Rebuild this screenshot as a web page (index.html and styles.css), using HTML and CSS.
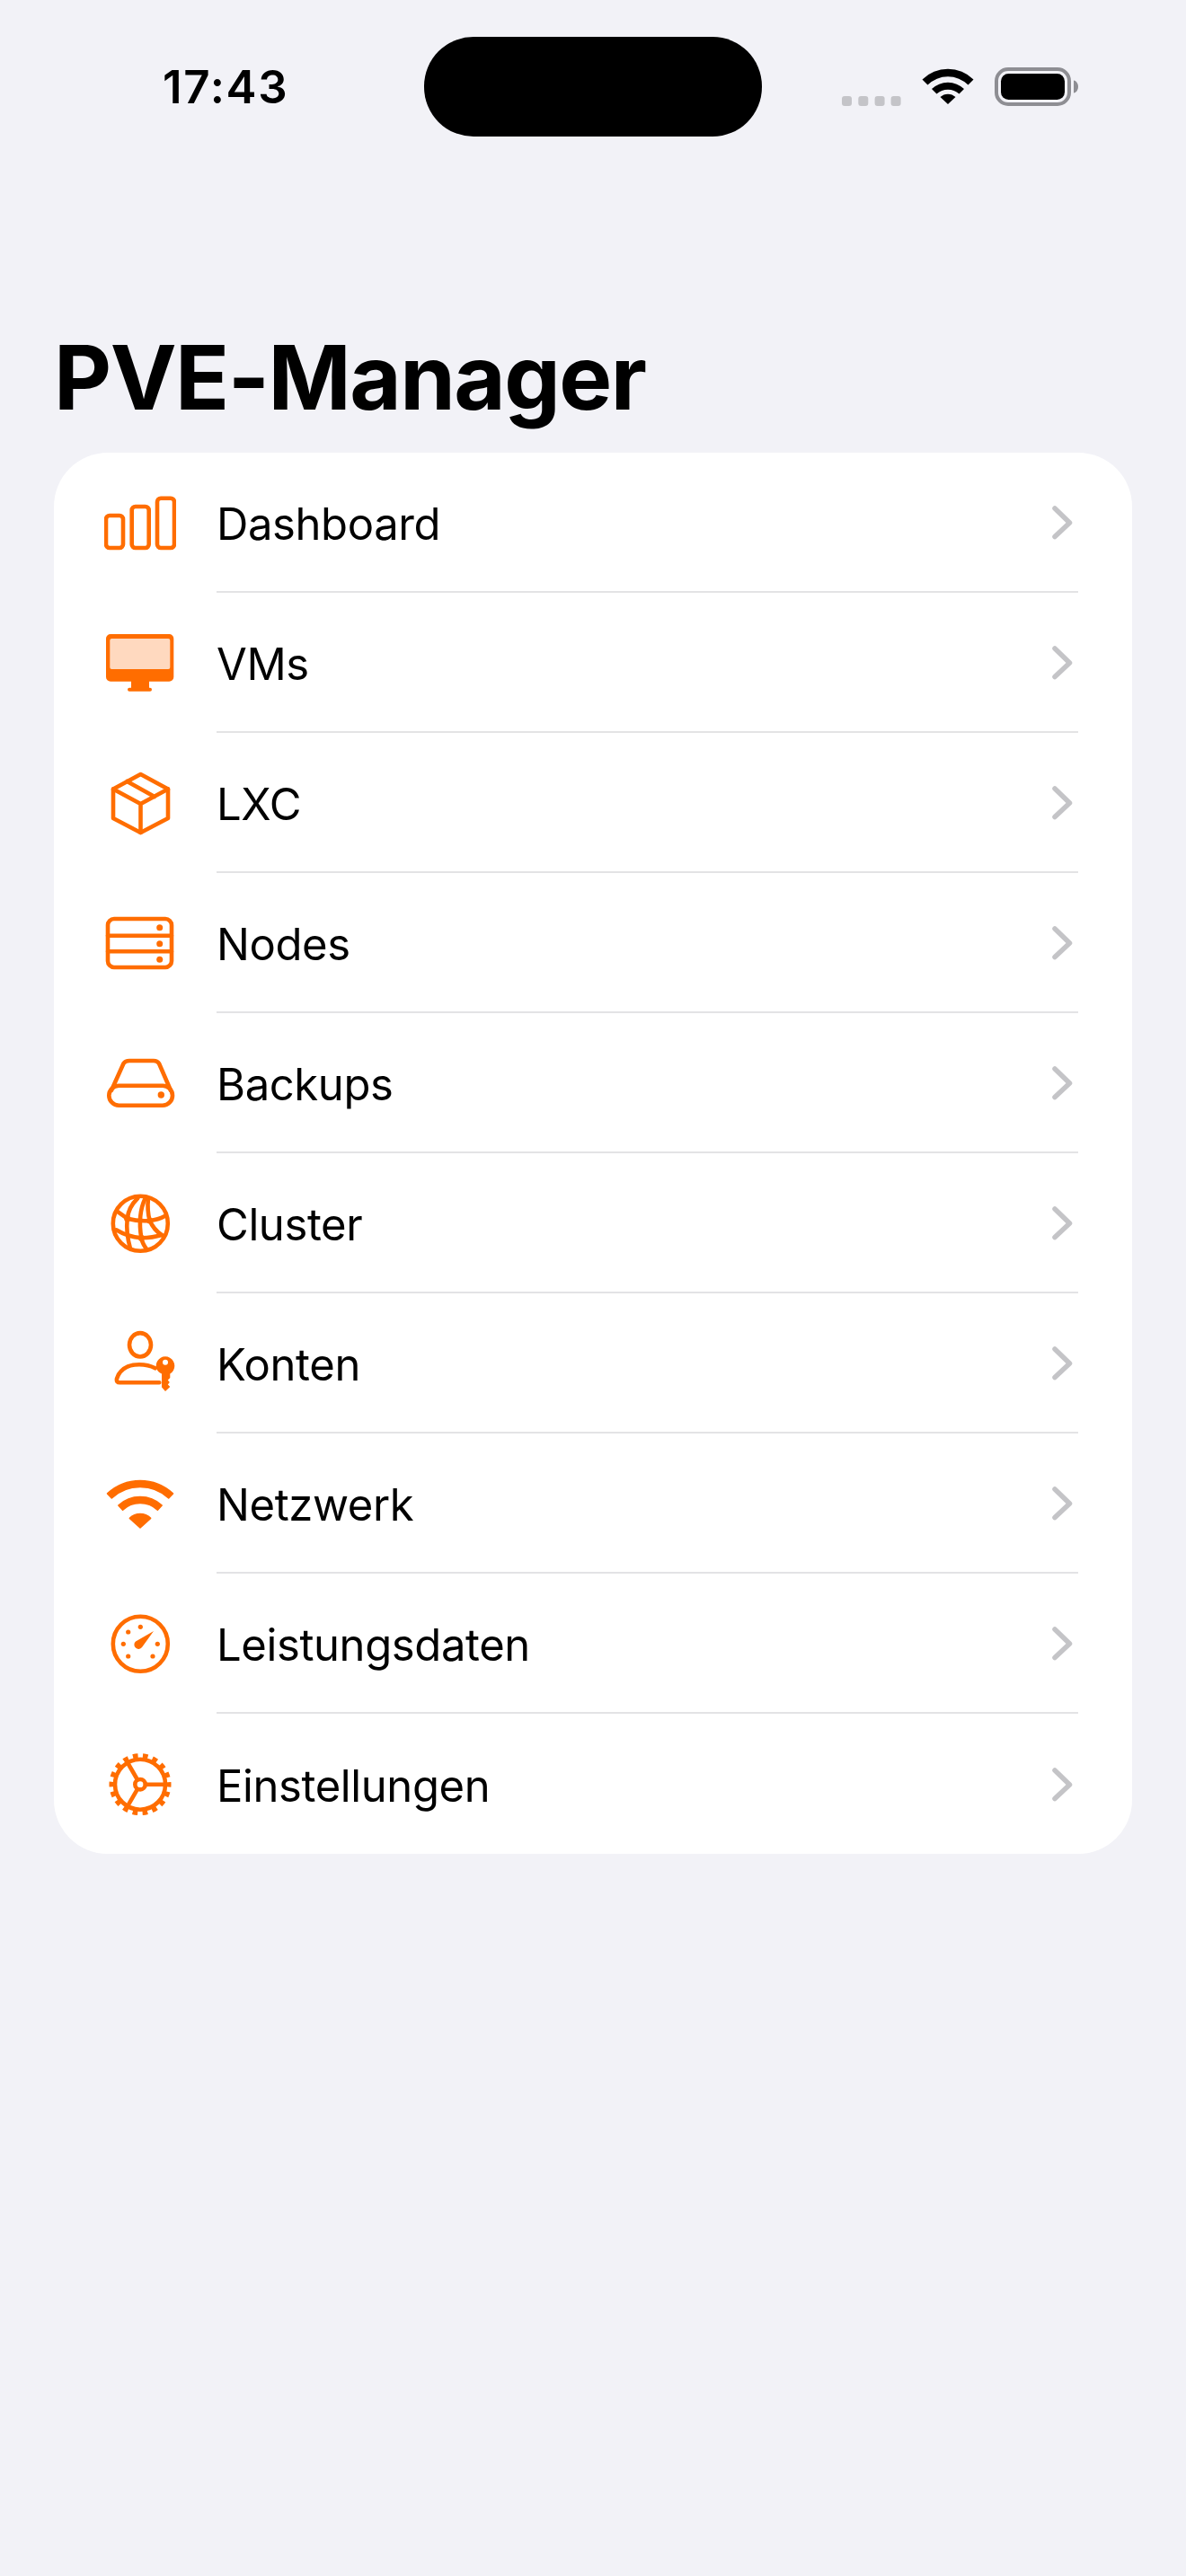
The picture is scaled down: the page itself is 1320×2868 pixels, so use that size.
FILE: index.html
```html
<!DOCTYPE html>
<html lang="de">
<head>
    <meta charset="UTF-8">
    <meta name="viewport" content="width=device-width, initial-scale=1.0">
    <title>PVE-Manager</title>
    <link rel="stylesheet" href="styles.css">
</head>
<body>
    <!-- Statusleiste -->
    <div class="status">
        <div class="time">17:43</div>
        <div class="island"></div>
        <div class="status-icons">
            <svg class="signal" width="66" height="11" viewBox="0 0 66 11">
                <rect x="0" y="0" width="11" height="11" rx="3"/>
                <rect x="18.3" y="0" width="11" height="11" rx="3"/>
                <rect x="36.6" y="0" width="11" height="11" rx="3"/>
                <rect x="54.6" y="0" width="11" height="11" rx="3"/>
            </svg>
            <svg class="wifi" width="60" height="42" viewBox="0 0 60 42">
                <path d="M1.5 13.5A40.500 40.500 0 0 1 58.500 13.500L52.500 19.500A32 32 0 0 0 7.500 19.500Z"/>
                <path d="M12 24A26 26 0 0 1 48 24L42.500 29.500A18.500 18.500 0 0 0 17.500 29.500Z"/>
                <path d="M21.500 33A12.500 12.500 0 0 1 38.500 33L30 41Z"/>
            </svg>
            <svg class="battery" width="93" height="43" viewBox="0 0 93 43">
                <rect class="battery-shell" x="2" y="2" width="81" height="39" rx="13"/>
                <rect class="battery-level" x="7" y="7" width="71" height="29" rx="8.500"/>
                <path class="battery-nub" d="M88 14.500C91 15 93 18 93 21.500C93 25 91 28 88 28.500Z"/>
            </svg>
        </div>
    </div>

    <h1 class="title">PVE-Manager</h1>

    <!-- Menüliste -->
    <ul class="menu">
        <li class="row">
            <svg class="icon" viewBox="0 0 80 80">
                <rect x="2" y="32" width="19" height="36" rx="4"/>
                <rect x="30.700" y="22" width="19" height="46" rx="4"/>
                <rect x="59" y="12.700" width="19" height="55.300" rx="4"/>
            </svg>
            <div class="row-body">
                <span class="label">Dashboard</span>
                <svg class="chevron" viewBox="0 0 26 40"><path d="M4 4L20.500 20L4 35.500"/></svg>
            </div>
        </li>
        <li class="row">
            <svg class="icon icon-solid" viewBox="0 0 80 80">
                <path d="M7 8H72.300A5 5 0 0 1 77.300 13V55.700A5 5 0 0 1 72.300 60.700H50V67.700H51A2 2 0 0 1 51 71.700H28A2 2 0 0 1 28 67.700H30V60.700H7A5 5 0 0 1 2 55.700V13A5 5 0 0 1 7 8Z"/>
                <rect class="screen" x="6.300" y="13" width="67" height="34" rx="2"/>
            </svg>
            <div class="row-body">
                <span class="label">VMs</span>
                <svg class="chevron" viewBox="0 0 26 40"><path d="M4 4L20.500 20L4 35.500"/></svg>
            </div>
        </li>
        <li class="row">
            <svg class="icon" viewBox="0 0 80 80">
                <path d="M40.500 8L71 24.500V57L40.500 73L10 57V24.500Z"/>
                <path d="M10 24.500L40.500 41L71 24.500M40.500 41V73M25.500 16L56 33"/>
            </svg>
            <div class="row-body">
                <span class="label">LXC</span>
                <svg class="chevron" viewBox="0 0 26 40"><path d="M4 4L20.500 20L4 35.500"/></svg>
            </div>
        </li>
        <li class="row">
            <svg class="icon" viewBox="0 0 80 80">
                <rect x="4" y="13" width="71" height="54" rx="7"/>
                <path d="M4 31.700H75M4 49.300H75"/>
                <circle class="dot" cx="61.700" cy="22.700" r="3.500"/>
                <circle class="dot" cx="61.700" cy="40.700" r="3.500"/>
                <circle class="dot" cx="61.700" cy="58.300" r="3.500"/>
            </svg>
            <div class="row-body">
                <span class="label">Nodes</span>
                <svg class="chevron" viewBox="0 0 26 40"><path d="M4 4L20.500 20L4 35.500"/></svg>
            </div>
        </li>
        <li class="row">
            <svg class="icon" viewBox="0 0 80 80">
                <rect x="5.300" y="42.700" width="70.700" height="22" rx="11"/>
                <path d="M8 48L21.500 18Q23.500 15 28 15H55Q59 15 61 18L74 48"/>
                <circle class="dot" cx="63.300" cy="53" r="3.700"/>
            </svg>
            <div class="row-body">
                <span class="label">Backups</span>
                <svg class="chevron" viewBox="0 0 26 40"><path d="M4 4L20.500 20L4 35.500"/></svg>
            </div>
        </li>
        <li class="row">
            <svg class="icon" viewBox="0 0 80 80">
                <circle cx="40.300" cy="40.300" r="30.500"/>
                <path d="M37.300 12Q27 22 25.700 34.700Q24 50 29 68"/>
                <path d="M14 26.300L25.700 34.700Q38 38 50.700 37Q60 36 67.300 32"/>
                <path d="M49 12Q47.500 26 50.700 37Q55 47 64 53"/>
                <path d="M45.700 12Q37 30 41.300 56.300Q43 64 47.300 68.700"/>
                <path d="M13.300 47.300Q26 55 41.300 56.300Q54 56 64 53"/>
                <circle class="dot" cx="25.700" cy="34.700" r="3.600"/>
                <circle class="dot" cx="50.700" cy="37" r="3.600"/>
                <circle class="dot" cx="41.300" cy="56.300" r="3.600"/>
            </svg>
            <div class="row-body">
                <span class="label">Cluster</span>
                <svg class="chevron" viewBox="0 0 26 40"><path d="M4 4L20.500 20L4 35.500"/></svg>
            </div>
        </li>
        <li class="row">
            <svg class="icon" viewBox="0 0 80 80">
                <ellipse cx="40" cy="19.300" rx="12" ry="13.200"/>
                <path d="M61.300 61.300H17.300Q13.300 61.300 14 57Q19 41.300 39 41.300Q49 41.300 56.700 45.300"/>
                <path class="key" fill-rule="evenodd" d="M57.700 42.700A10.300 10.300 0 1 1 73.300 51.500V56L70.800 58.500L72.800 61L70.800 63.500L73.300 66L68 71L64 66.500V51.500A10.300 10.300 0 0 1 57.700 42.700ZM65 38.700A3 3 0 1 0 71 38.700A3 3 0 1 0 65 38.700Z"/>
            </svg>
            <div class="row-body">
                <span class="label">Konten</span>
                <svg class="chevron" viewBox="0 0 26 40"><path d="M4 4L20.500 20L4 35.500"/></svg>
            </div>
        </li>
        <li class="row">
            <svg class="icon icon-solid" viewBox="0 0 80 80">
                <path class="wave" d="M3.500 28.900A53.500 53.500 0 0 1 76.500 28.900L71.700 34A46.500 46.500 0 0 0 8.300 34Z"/>
                <path class="wave" d="M15.800 42A35.500 35.500 0 0 1 64.200 42L59.400 47.200A28.500 28.500 0 0 0 20.600 47.200Z"/>
                <path class="wave" d="M28.330 56.330A16.500 16.500 0 0 1 51.670 56.330L40 67Z"/>
            </svg>
            <div class="row-body">
                <span class="label">Netzwerk</span>
                <svg class="chevron" viewBox="0 0 26 40"><path d="M4 4L20.500 20L4 35.500"/></svg>
            </div>
        </li>
        <li class="row">
            <svg class="icon" viewBox="0 0 80 80">
                <circle cx="40.300" cy="40.300" r="30.500"/>
                <circle class="dot" cx="40.300" cy="21.300" r="2.600"/>
                <circle class="dot" cx="26.700" cy="27" r="2.600"/>
                <circle class="dot" cx="21.300" cy="40.300" r="2.600"/>
                <circle class="dot" cx="26.700" cy="54" r="2.600"/>
                <circle class="dot" cx="54" cy="54" r="2.600"/>
                <circle class="dot" cx="59.300" cy="40.300" r="2.600"/>
                <path class="dot" d="M55 26L35 37.500A4.800 4.800 0 1 0 42 44Z"/>
            </svg>
            <div class="row-body">
                <span class="label">Leistungsdaten</span>
                <svg class="chevron" viewBox="0 0 26 40"><path d="M4 4L20.500 20L4 35.500"/></svg>
            </div>
        </li>
        <li class="row">
            <svg class="icon" viewBox="0 0 80 80">
                <circle cx="40" cy="40.700" r="28"/>
                <circle class="teeth" cx="40" cy="40.700" r="31"/>
                <circle cx="40" cy="40.700" r="5.700"/>
                <path d="M46 40.700H68M37 35.500L26 16.500M37 45.900L26 64.900"/>
            </svg>
            <div class="row-body">
                <span class="label">Einstellungen</span>
                <svg class="chevron" viewBox="0 0 26 40"><path d="M4 4L20.500 20L4 35.500"/></svg>
            </div>
        </li>
    </ul>
</body>
</html>
```

FILE: styles.css
```css
html, body, ul, li, h1 {
    padding: 0;
    margin: 0;
}
body {
    min-height: 2868px;
    background: #f2f2f7;
    color: #000;
    font-family: Inter, "Liberation Sans", sans-serif;
    overflow: hidden;
}

/* Statusleiste */
.status {
    display: grid;
    grid-template-columns: 472px 376px 1fr;
    align-items: center;
    padding-top: 41px;
    height: 111px;
}
.time {
    padding-left: 181px;
    font-size: 51px;
    font-weight: 600;
    line-height: 62px;
    letter-spacing: 1.7px;
}
.island {
    height: 111px;
    border-radius: 55px;
    background: #000;
}
.status-icons {
    display: flex;
    align-items: flex-end;
    padding-left: 89px;
    height: 43px;
}
.signal {
    fill: #c4c4c8;
}
.wifi {
    margin-left: 22px;
    margin-bottom: 1px;
}
.battery {
    margin-left: 22px;
}
.battery-shell {
    fill: none;
    stroke: #8e8e93;
    stroke-width: 4;
}
.battery-nub {
    fill: #8e8e93;
}

/* Titel */
.title {
    padding: 208px 0 0 60px;
    margin-bottom: 24px;
    font-size: 99px;
    font-weight: 700;
    line-height: 120px;
    letter-spacing: -1.5px;
}

/* Menü */
.menu {
    margin: 0 60px;
    border-radius: 60px;
    background: #fff;
    list-style: none;
}
.row {
    display: flex;
    align-items: stretch;
    height: 156px;
    padding-left: 56px;
}
.icon {
    width: 80px;
    height: 80px;
    margin-top: 38px;
    margin-right: 45px;
    flex: none;
    fill: none;
    stroke: #ff6d00;
    stroke-width: 4.600;
    stroke-linecap: round;
    stroke-linejoin: round;
}
.icon-solid {
    fill: #ff6d00;
    stroke: none;
}
.icon .screen {
    fill: #ffd9bf;
}
.icon .dot, .icon .key {
    fill: #ff6d00;
    stroke: none;
}
.icon .wave {
    stroke: #ff6d00;
    stroke-width: 1.500;
}
.icon .teeth {
    stroke-width: 7;
    stroke-linecap: butt;
    stroke-dasharray: 5.500 5.322;
    stroke-dashoffset: 2.750;
}
.row-body {
    display: flex;
    flex: 1;
    align-items: center;
    justify-content: space-between;
    margin-right: 60px;
    padding-right: 4px;
    border-bottom: 2px solid #e3e3e5;
}
.row:last-child .row-body {
    border-bottom: 0;
}
.label {
    margin-top: 5px;
    font-size: 49px;
    line-height: 60px;
    letter-spacing: -0.4px;
}
.chevron {
    width: 26px;
    height: 40px;
    margin-top: 2px;
    flex: none;
    fill: none;
    stroke: #c4c4c7;
    stroke-width: 5.500;
    stroke-linecap: round;
    stroke-linejoin: round;
}
```
